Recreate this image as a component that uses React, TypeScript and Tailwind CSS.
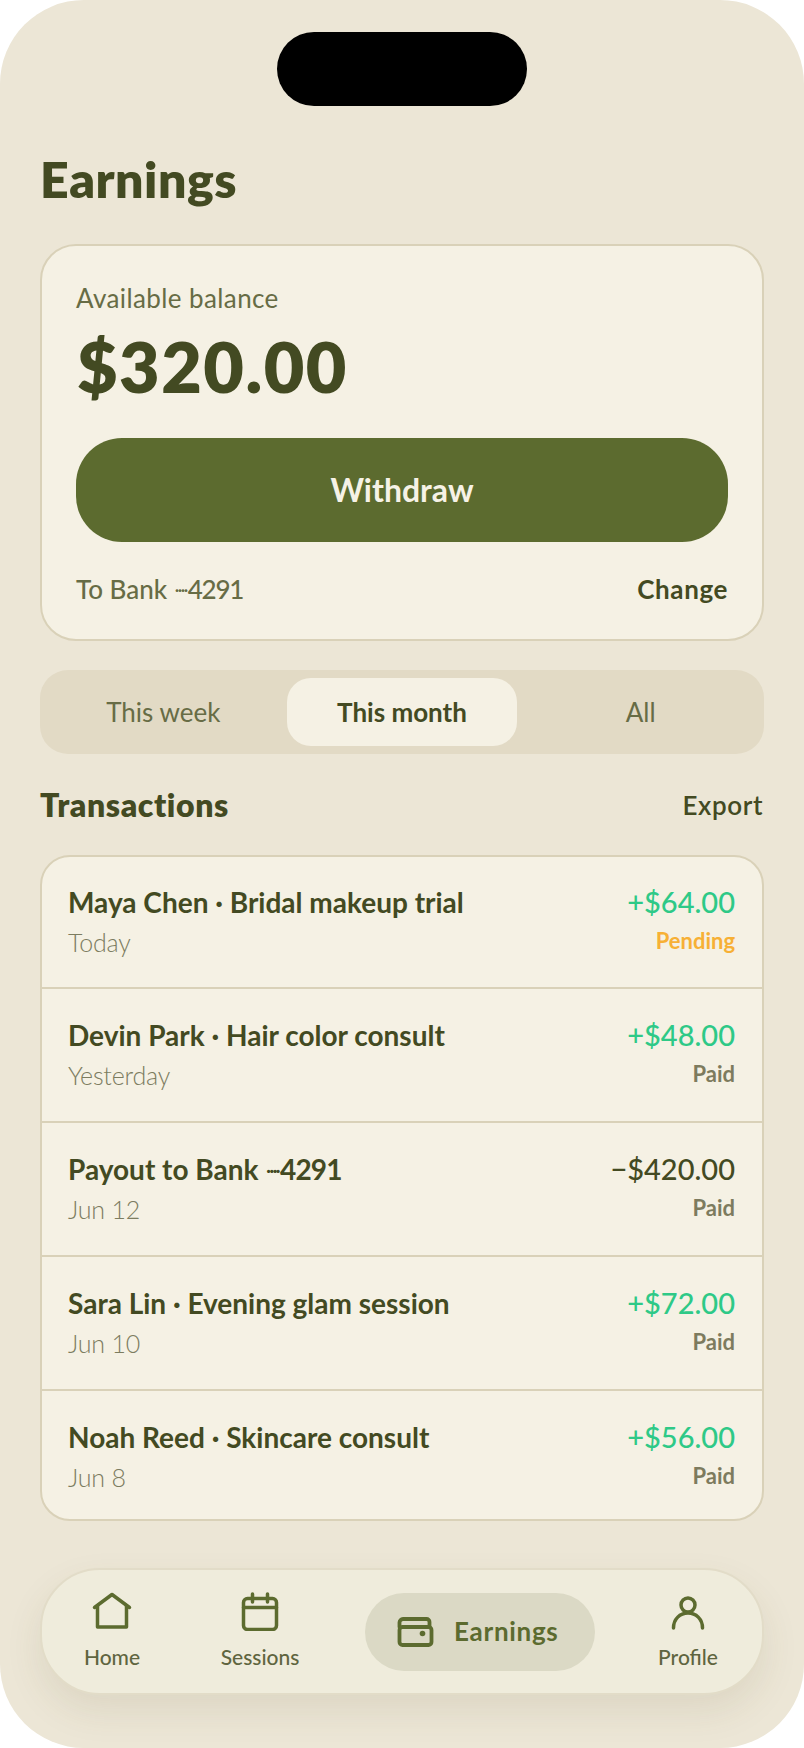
const font = { fontFamily: '"Lato", "Noto Sans", sans-serif' };

const rows = [
  { title: "Maya Chen · Bridal makeup trial", date: "Today", amount: "+$64.00", status: "Pending" },
  { title: "Devin Park · Hair color consult", date: "Yesterday", amount: "+$48.00", status: "Paid" },
  { title: "Payout to Bank", bank: "4291", date: "Jun 12", amount: "−$420.00", status: "Paid" },
  { title: "Sara Lin · Evening glam session", date: "Jun 10", amount: "+$72.00", status: "Paid" },
  { title: "Noah Reed · Skincare consult", date: "Jun 8", amount: "+$56.00", status: "Paid" },
];

const HomeIcon = () => (
  <svg width="40" height="40" viewBox="0 0 40 40" fill="none" stroke="#5c6b2f" strokeWidth="3.5" strokeLinecap="round" strokeLinejoin="round">
    <path d="M2.500 16.500 20 3.500l17.500 13" />
    <path d="M5.500 14.500V36h29V14.500" />
  </svg>
);

const CalendarIcon = () => (
  <svg width="40" height="40" viewBox="0 0 40 40" fill="none" stroke="#5c6b2f" strokeWidth="3.5" strokeLinecap="round" strokeLinejoin="round">
    <rect x="3.500" y="7.500" width="33" height="31" rx="4" />
    <path d="M3.500 16.500h33M12.500 3v8M27.500 3v8" />
  </svg>
);

const WalletIcon = () => (
  <svg width="40" height="40" viewBox="0 0 40 40" fill="none" stroke="#5c6b2f" strokeWidth="3.8" strokeLinecap="round" strokeLinejoin="round">
    <path d="M3.500 15V10.500a3.500 3.500 0 0 1 3.500-3.500h23.500a3 3 0 0 1 3 3v4.500" />
    <rect x="3.500" y="15" width="32" height="18" rx="3" />
    <circle cx="26.500" cy="21.500" r="2.800" fill="#5c6b2f" stroke="none" />
  </svg>
);

const ProfileIcon = () => (
  <svg width="40" height="40" viewBox="0 0 40 40" fill="none" stroke="#5c6b2f" strokeWidth="3.5" strokeLinecap="round" strokeLinejoin="round">
    <circle cx="20" cy="14" r="7" />
    <path d="M5.500 37c0-9 6.500-15 14.500-15s14.500 6 14.500 15" />
  </svg>
);

// tiny squeezed dots in front of the account number
const Dots = () => <span className="mx-[1px] align-[3px] text-[17px] leading-none tracking-[-1.5px]">····</span>;

const NavItem = ({ label, icon, className }: { label: string; icon: React.ReactNode; className: string }) => (
  <div className={`mb-[3px] flex w-[100px] flex-col items-center ${className}`}>
    {icon}
    <span className="mt-[13px] text-[21px] leading-[26px] font-medium text-[#5f6540]">{label}</span>
  </div>
);

export default function App() {
  return (
    <div className="h-[1748px] w-[804px] bg-white" style={font}>
      <div className="flex h-full flex-col rounded-[84px] bg-[#ece6d6] px-[40px]">
        <div className="mx-auto mt-[32px] h-[74px] w-[250px] shrink-0 rounded-[37px] bg-black" />

        <h1 className="mt-[41px] text-[50px] leading-[64px] font-extrabold tracking-[0.5px] text-[#434a22]">Earnings</h1>

        <section className="mt-[33px] h-[397px] rounded-[36px] border-2 border-[#d9d1b8] bg-[#f5f1e4] px-[34px] pt-[37px]">
          <p className="text-[26px] leading-[30px] tracking-[0.4px] text-[#676c45]">Available balance</p>
          <p className="mt-[11px] pl-[1px] text-[70px] leading-[84px] font-extrabold tracking-[1.5px] text-[#434a22]">$320.00</p>
          <button className="mt-[30px] h-[104px] w-full rounded-[46px] bg-[#5c6b2f] text-[32px] font-bold text-[#f6f2e6]">
            Withdraw
          </button>
          <div className="mt-[31px] flex items-center justify-between text-[26px] leading-[32px]">
            <span className="font-medium text-[#676c45]">
              To Bank <Dots />
              <span className="tracking-[-1.2px]">4291</span>
            </span>
            <span className="font-bold tracking-[0.6px] text-[#434a22]">Change</span>
          </div>
        </section>

        <div className="mt-[29px] grid h-[84px] grid-cols-3 items-center gap-2 rounded-[28px] bg-[#e2dac5] px-[8px] text-[26px]">
          <div className="text-center text-[#676c45]">This week</div>
          <div className="flex h-[68px] items-center justify-center rounded-[24px] bg-[#f5f1e4] font-bold text-[#434a22]">
            This month
          </div>
          <div className="text-center text-[#676c45]">All</div>
        </div>

        <div className="mt-[31px] flex items-center justify-between">
          <h2 className="text-[32px] leading-[40px] font-extrabold tracking-[0.6px] text-[#434a22]">Transactions</h2>
          <span className="pr-[1px] text-[26px] font-semibold tracking-[0.6px] text-[#434a22]">Export</span>
        </div>

        <section className="mt-[30px] overflow-hidden rounded-[30px] border-2 border-[#d9d1b8] bg-[#f5f1e4]">
          {rows.map((r, i) => (
            <div
              key={r.title}
              className={`flex justify-between pr-[27px] pl-[26px] ${
                i === 0
                  ? "h-[130px] pt-[27px]"
                  : i === 4
                    ? "h-[130px] border-t-2 border-[#d9d1b8] pt-[28px]"
                    : "h-[134px] border-t-2 border-[#d9d1b8] pt-[28px]"
              }`}
            >
              <div>
                <p className="text-[28px] leading-[36px] font-bold text-[#434a22]">
                  {r.title}
                  {r.bank && (
                    <>
                      {" "}
                      <Dots />
                      <span className="tracking-[-0.8px]">{r.bank}</span>
                    </>
                  )}
                </p>
                <p className="mt-[6px] text-[25px] leading-[32px] font-light tracking-[-0.2px] text-[#7c7c60]">{r.date}</p>
              </div>
              <div className="text-right">
                <p
                  className={`text-[29px] leading-[36px] font-medium ${r.amount.startsWith("+") ? "text-[#2ec987]" : "text-[#434a22]"}`}
                >
                  {r.amount}
                </p>
                <p
                  className={`mt-[7px] text-[22px] leading-[28px] font-bold ${r.status === "Pending" ? "text-[#f7b035]" : "text-[#7d7b5e]"}`}
                >
                  {r.status}
                </p>
              </div>
            </div>
          ))}
        </section>

        <nav className="mt-[47px] flex h-[127px] items-center rounded-[60px] border-2 border-[#e2dcc8] bg-[#efecdc] pl-[20px] shadow-[0_16px_36px_rgba(90,80,40,0.1)]">
          <NavItem label="Home" icon={<HomeIcon />} className="" />
          <NavItem label="Sessions" icon={<CalendarIcon />} className="ml-[48px]" />
          <div className="ml-[55px] flex h-[78px] w-[230px] items-center gap-[18px] rounded-[39px] bg-[#dbd9c5] pl-[31px]">
            <WalletIcon />
            <span className="text-[26px] font-bold tracking-[0.7px] text-[#5c6b2f]">Earnings</span>
          </div>
          <NavItem label="Profile" icon={<ProfileIcon />} className="ml-[43px]" />
        </nav>
      </div>
    </div>
  );
}
